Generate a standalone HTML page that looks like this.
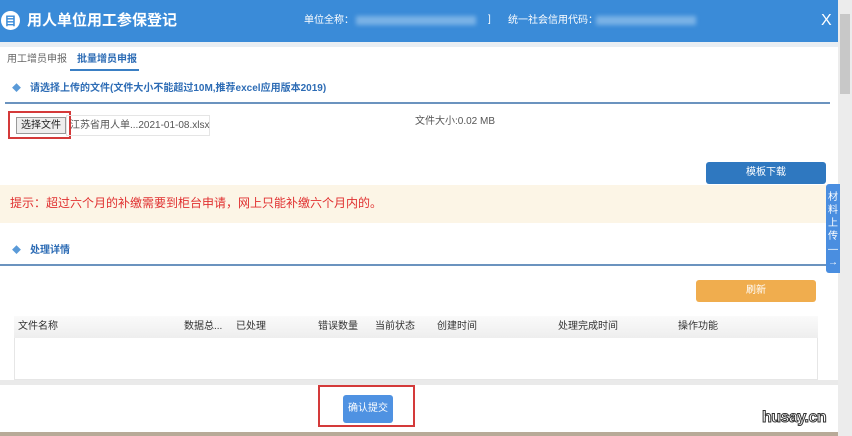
<!DOCTYPE html>
<html><head><meta charset="utf-8"><style>
*{margin:0;padding:0;box-sizing:border-box}
body{width:852px;height:436px;overflow:hidden;background:#fff;font-family:"Liberation Sans","Noto Sans CJK SC",sans-serif;position:relative;font-size:10px;color:#333;line-height:1}
.a{position:absolute}
.b{display:flex;align-items:center;justify-content:center}
</style></head><body>
<div class="a" style="left:0;top:0;width:838px;height:42px;background:#3a8bd8"></div>
<div class="a" style="left:0;top:42px;width:838px;height:5px;background:#e9eef3"></div>
<div class="a b" style="left:1px;top:11px;width:19px;height:19px;border-radius:50%;background:#fff;color:#3a8bd8;font-size:12px;font-weight:bold">目</div>
<div class="a" style="left:27px;top:13px;color:#fff;font-size:15px;font-weight:bold">用人单位用工参保登记</div>
<div class="a" style="left:304px;top:16px;color:#fff;font-size:10px">单位全称：</div>
<div class="a" style="left:356px;top:16px;width:120px;height:9px;background:#7ab2e6;filter:blur(2px)"></div>
<div class="a" style="left:488px;top:15px;color:#fff;font-size:10px">]</div>
<div class="a" style="left:508px;top:16px;color:#fff;font-size:10px">统一社会信用代码：</div>
<div class="a" style="left:596px;top:16px;width:100px;height:9px;background:#7ab2e6;filter:blur(2px)"></div>
<div class="a" style="left:821px;top:13px;color:#fff;font-size:16px">X</div>
<div class="a" style="left:838px;top:0;width:14px;height:436px;background:#ececec"></div>
<div class="a" style="left:840px;top:14px;width:10px;height:80px;background:#c8c8c8"></div>
<div class="a" style="left:7px;top:55px;color:#666;font-size:10px">用工增员申报</div>
<div class="a" style="left:77px;top:55px;color:#2d6cb5;font-size:10px;font-weight:bold">批量增员申报</div>
<div class="a" style="left:70px;top:69px;width:69px;height:2px;background:#3a7fc4"></div>
<div class="a" style="left:12px;top:84px;color:#5a9ad8;font-size:9px">◆</div>
<div class="a" style="left:30px;top:84px;color:#2d6cb5;font-size:10px;font-weight:bold">请选择上传的文件(文件大小不能超过10M,推荐excel应用版本2019)</div>
<div class="a" style="left:5px;top:102px;width:825px;height:2px;background:#6b93bf"></div>
<div class="a" style="left:8px;top:111px;width:63px;height:28px;border:2px solid #d43a3a"></div>
<div class="a b" style="left:16px;top:117px;width:50px;height:17px;border:1px solid #999;background:#eee;font-size:10px;color:#222">选择文件</div>
<div class="a" style="left:66px;top:115px;width:144px;height:21px;border:1px solid #e5e5e5"></div>
<div class="a" style="left:70px;top:121px;color:#555;font-size:10px">江苏省用人单...2021-01-08.xlsx</div>
<div class="a" style="left:415px;top:117px;color:#555;font-size:10px">文件大小:0.02 MB</div>
<div class="a b" style="left:706px;top:162px;width:120px;height:22px;background:#2f78c0;border-radius:3px;color:#fff;font-size:10px">模板下载</div>
<div class="a" style="left:0;top:185px;width:826px;height:38px;background:#fcf5e6"></div>
<div class="a" style="left:10px;top:197px;color:#e03030;font-size:12px">提示：超过六个月的补缴需要到柜台申请，网上只能补缴六个月内的。</div>
<div class="a" style="left:826px;top:184px;width:14px;height:89px;background:#4a8ee0;border-radius:3px 0 0 3px;color:#fff;font-size:10px;line-height:13px;text-align:center;padding-top:7px">材<br>料<br>上<br>传<br>—<br>→</div>
<div class="a" style="left:12px;top:246px;color:#5a9ad8;font-size:9px">◆</div>
<div class="a" style="left:30px;top:246px;color:#2d6cb5;font-size:10px;font-weight:bold">处理详情</div>
<div class="a" style="left:0;top:264px;width:826px;height:2px;background:#6b93bf"></div>
<div class="a b" style="left:696px;top:280px;width:120px;height:22px;background:#f0ad4e;border-radius:3px;color:#fff;font-size:10px">刷新</div>
<div class="a" style="left:14px;top:316px;width:804px;height:64px;border:1px solid #e6e6e6"></div>
<div class="a" style="left:14px;top:316px;width:804px;height:22px;background:linear-gradient(#fafafa,#eee);font-size:10px;color:#333">
<span class="a" style="left:4px;top:6px">文件名称</span>
<span class="a" style="left:170px;top:6px">数据总...</span>
<span class="a" style="left:222px;top:6px">已处理</span>
<span class="a" style="left:304px;top:6px">错误数量</span>
<span class="a" style="left:361px;top:6px">当前状态</span>
<span class="a" style="left:423px;top:6px">创建时间</span>
<span class="a" style="left:544px;top:6px">处理完成时间</span>
<span class="a" style="left:664px;top:6px">操作功能</span>
</div>
<div class="a" style="left:0;top:380px;width:838px;height:5px;background:#eaeaea"></div>
<div class="a" style="left:318px;top:385px;width:97px;height:42px;border:2px solid #d43a3a"></div>
<div class="a b" style="left:343px;top:395px;width:50px;height:28px;background:#4f92e2;border-radius:3px;color:#fff;font-size:10px">确认提交</div>
<div class="a" style="left:0;top:432px;width:838px;height:4px;background:#b8aa98"></div>
<div class="a" style="left:762px;top:410px;color:#fff;font-size:16px;font-weight:bold;letter-spacing:-0.5px;-webkit-text-stroke:1px #333">husay.cn</div>
</body></html>
